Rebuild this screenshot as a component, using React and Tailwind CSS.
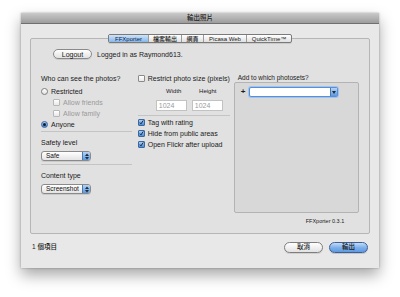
import React from 'react';

const font = "font-['Liberation_Sans','Noto_Sans_CJK_TC',sans-serif]";

const Arrows = () => (
  <svg width="4" height="7" viewBox="0 0 4 7">
    <path d="M0 3 L2 0.5 L4 3 Z" fill="#1d2a3a" />
    <path d="M0 4 L2 6.5 L4 4 Z" fill="#1d2a3a" />
  </svg>
);

const Select = ({ label, w }) => (
  <div className={`flex h-[10px] items-center rounded-[3px] border border-[#8a8a8a] bg-gradient-to-b from-white to-[#e4e4e4] shadow-[0_1px_0_rgba(0,0,0,0.1)] ${w}`}>
    <span className="flex-1 pl-[4px] text-[6.5px] leading-none text-[#111]">{label}</span>
    <span className="flex h-full w-[8px] items-center justify-center rounded-r-[2px] border-l border-[#4f78ad] bg-gradient-to-b from-[#b6d3f4] to-[#5b98de]">
      <Arrows />
    </span>
  </div>
);

const Check = ({ checked, disabled }) =>
  checked ? (
    <span className="flex h-[7px] w-[7px] items-center justify-center rounded-[1px] border border-[#3c679e] bg-gradient-to-b from-[#a9ccf3] to-[#4a89d8]">
      <svg width="7" height="7" viewBox="0 0 7 7">
        <path d="M1.2 3.6 L2.8 5.4 L6 0.6" stroke="#0e1c2e" strokeWidth="1.3" fill="none" />
      </svg>
    </span>
  ) : (
    <span className={`h-[7px] w-[7px] shrink-0 rounded-[1px] border bg-gradient-to-b from-white to-[#e8e8e8] ${disabled ? 'border-[#b8b8b8]' : 'border-[#8a8a8a]'}`} />
  );

const Radio = ({ on }) =>
  on ? (
    <span className="flex h-[7px] w-[7px] items-center justify-center rounded-full border border-[#3c679e] bg-gradient-to-b from-[#a9ccf3] to-[#4a89d8]">
      <span className="h-[2.5px] w-[2.5px] rounded-full bg-[#0e1c2e]" />
    </span>
  ) : (
    <span className="h-[7px] w-[7px] rounded-full border border-[#7e7e7e] bg-gradient-to-b from-white to-[#e2e2e2]" />
  );

const Row = ({ children, className = '' }) => (
  <div className={`flex h-[11px] items-center gap-[3px] whitespace-nowrap text-[7px] leading-none ${className}`}>{children}</div>
);

const Sep = ({ className = '' }) => <div className={`h-px bg-[#c4c4c4] ${className}`} />;

const tabs = [
  { t: 'FFXporter', w: 'w-[39px]' },
  { t: '檔案輸出', w: 'w-[33px]' },
  { t: '網頁', w: 'w-[22px]' },
  { t: 'Picasa Web', w: 'w-[43px]' },
  { t: 'QuickTime™', w: 'w-[45px]' },
];

const App = () => {
  return (
    <div className={`h-[297px] w-[400px] bg-white pt-[13px] text-[#1a1a1a] ${font}`}>
      <div className="mx-auto flex h-[255px] w-[358px] flex-col bg-[#e8e8e8] shadow-[0_7px_14px_rgba(0,0,0,0.35),0_0_2px_rgba(0,0,0,0.3)]">
        {/* title bar */}
        <div className="flex h-[11px] items-center justify-center border-b border-[#6f6f6f] bg-gradient-to-b from-[#cacaca] to-[#9c9c9c] text-[6.5px] leading-none font-medium text-[#222]">
          輸出照片
        </div>

        <div className="flex flex-1 flex-col px-[9px] pt-[10px]">
          {/* segmented control */}
          <div className="relative z-10 flex justify-center">
            <div className="flex h-[9px] rounded-[2px] border border-[#7a7a7a] bg-gradient-to-b from-white to-[#e0e0e0] text-[6px] leading-none shadow-[0_1px_0_rgba(0,0,0,0.1)]">
              {tabs.map((x, i) => (
                <div
                  key={x.t}
                  className={`flex items-center justify-center ${x.w} ${i > 0 ? 'border-l border-[#9a9a9a]' : ''} ${i === 0 ? 'rounded-l-[1px] bg-gradient-to-b from-[#cfe3f8] to-[#86b8ec] text-[#10233f]' : 'font-medium text-[#222]'}`}
                >
                  {x.t}
                </div>
              ))}
            </div>
          </div>

          {/* tab box */}
          <div className="-mt-[5px] flex h-[196px] flex-col rounded-[2px] border border-[#b6b6b6] bg-[#e1e1e1] px-[10px]">
            <div className="mt-[10px] flex items-center gap-[5px] pl-[12px] text-[7px] leading-none">
              <span className="flex h-[10px] w-[39px] items-center justify-center rounded-full border border-[#8a8a8a] bg-gradient-to-b from-white to-[#e2e2e2] shadow-[0_1px_0_rgba(0,0,0,0.1)]">
                Logout
              </span>
              <span>Logged in as Raymond613.</span>
            </div>

            <div className="mt-[14px] flex">
              {/* left */}
              <div className="flex w-[92px] flex-col">
                <Row className="h-[10px]">Who can see the photos?</Row>
                <Row className="mt-[2px]"><Radio /><span>Restricted</span></Row>
                <Row className="pl-[12px] text-[#9a9a9a]"><Check disabled /><span>Allow friends</span></Row>
                <Row className="pl-[12px] text-[#9a9a9a]"><Check disabled /><span>Allow family</span></Row>
                <Row><Radio on /><span>Anyone</span></Row>
                <Sep className="mt-[1px]" />
                <Row className="mt-[5px]">Safety level</Row>
                <div className="mt-[3px]"><Select label="Safe" w="w-[50px]" /></div>
                <Sep className="mt-[3px]" />
                <Row className="mt-[5px]">Content type</Row>
                <div className="mt-[3px]"><Select label="Screenshot" w="w-[50px]" /></div>
              </div>

              {/* middle */}
              <div className="ml-[6px] flex w-[92px] flex-col">
                <Row className="h-[10px] text-[6.3px]"><Check /><span>Restrict photo size (pixels)</span></Row>
                <div className="mt-[4px] flex pl-[18px] text-[6px] leading-none font-medium">
                  <span className="w-[36px] text-center">Width</span>
                  <span className="w-[32px] text-center">Height</span>
                </div>
                <div className="mt-[6px] flex gap-[5px] pl-[18px]">
                  <span className="flex h-[11px] w-[31px] items-center border border-[#c2c2c2] bg-white pl-[2px] text-[7px] leading-none text-[#9a9a9a]">1024</span>
                  <span className="flex h-[11px] w-[31px] items-center border border-[#c2c2c2] bg-white pl-[2px] text-[7px] leading-none text-[#9a9a9a]">1024</span>
                </div>
                <Sep className="mt-[4px]" />
                <Row className="mt-[1px] h-[10.5px] text-[6.5px]"><Check checked /><span>Tag with rating</span></Row>
                <Row className="h-[10.5px] text-[6.5px]"><Check checked /><span>Hide from public areas</span></Row>
                <Row className="h-[10.5px] text-[6.5px]"><Check checked /><span>Open Flickr after upload</span></Row>
              </div>

              {/* right */}
              <div className="ml-[4px] flex w-[127px] flex-col">
                <div className="pl-[4px] text-[6.5px] leading-[8px] mt-[1px]">Add to which photosets?</div>
                <div className="h-[131px] rounded-[2px] border border-[#b3b3b3] bg-[#d8d8d8] pt-[4px]">
                  <div className="flex items-center gap-[4px] pl-[6px]">
                    <span className="text-[8px] leading-none font-bold">+</span>
                    <div className="flex h-[10px] w-[89px] items-center rounded-[2px] border border-[#5b8fd3] bg-white shadow-[0_0_0_1px_#9fc3f0]">
                      <span className="flex-1" />
                      <span className="flex h-full w-[7px] items-center justify-center border-l border-[#4f78ad] bg-gradient-to-b from-[#b6d3f4] to-[#5b98de]">
                        <svg width="4" height="3" viewBox="0 0 4 3"><path d="M0 0 L4 0 L2 3 Z" fill="#1d2a3a" /></svg>
                      </span>
                    </div>
                  </div>
                </div>
                <div className="mt-[6px] pl-[72px] text-[5.5px] leading-none">FFXporter 0.3.1</div>
              </div>
            </div>
          </div>

          {/* footer */}
          <div className="flex flex-1 items-center justify-between pb-[8px] pl-[2px] pr-[2px]">
            <span className="text-[6.5px] leading-none font-medium">1 個項目</span>
            <div className="flex gap-[6px]">
              <span className="flex h-[11px] w-[39px] items-center justify-center rounded-full border border-[#7e7e7e] bg-gradient-to-b from-white to-[#e2e2e2] text-[6.5px] leading-none font-medium shadow-[0_1px_0_rgba(0,0,0,0.1)]">
                取消
              </span>
              <span className="flex h-[11px] w-[39px] items-center justify-center rounded-full border border-[#3b5f96] bg-gradient-to-b from-[#c3dcf7] via-[#7fb1ea] to-[#5e9ae2] text-[6.5px] leading-none font-medium shadow-[0_1px_0_rgba(0,0,0,0.15)]">
                輸出
              </span>
            </div>
          </div>
        </div>
      </div>
    </div>
  );
};

export default App;
